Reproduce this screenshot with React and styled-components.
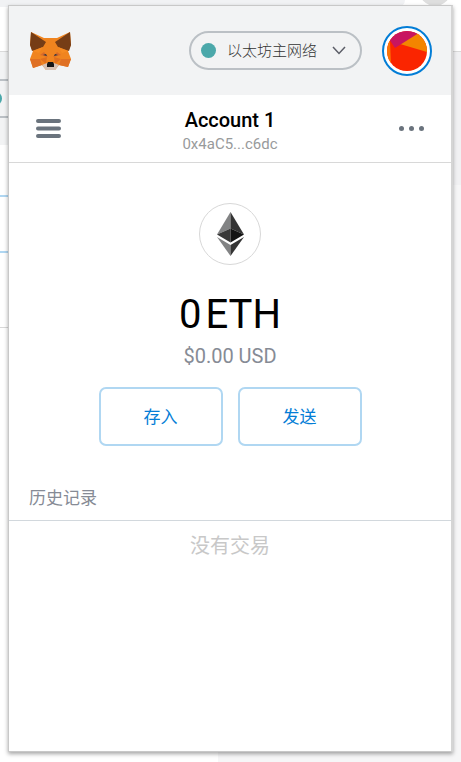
import React from "react";
import styled, { createGlobalStyle } from "styled-components";

const GlobalStyle = createGlobalStyle`
  *, *::before, *::after { box-sizing: border-box; }
  body { margin: 0; font-family: Roboto, "Noto Sans CJK SC", sans-serif; color: #000; }
  h1, h2, p { margin: 0; font-weight: 400; }
  button { font: inherit; cursor: pointer; padding: 0; }
  svg { display: block; }
`;

const Page = styled.div`
  position: relative;
  display: flex;
  min-height: 100vh;
  padding: 5px 8px 10px;
  overflow: hidden;
`;

const Backdrop = styled.div`
  position: absolute;
  inset: 0;
  display: grid;
  grid-template-rows: 52px 1fr;
  background: #fff;
`;

const BrowserBar = styled.div`
  position: relative;
  overflow: hidden;
  border-bottom: 1px solid #dadada;
  &::before {
    content: "";
    position: absolute;
    left: 0;
    top: 0;
    width: 405px;
    height: 7px;
    background: #f1f2f4;
    border-radius: 0 0 8px 0;
  }
  &::after {
    content: "";
    position: absolute;
    right: 10px;
    top: -26px;
    width: 32px;
    height: 32px;
    border-radius: 50%;
    background: #dedede;
  }
`;

const BackColumns = styled.div`
  display: grid;
  grid-template-columns: 218px 1fr;
`;

const BackLeft = styled.div`
  background: #fff;
`;

const BackHeader = styled.div`
  height: 93px;
  padding-top: 27px;
  background: #f2f3f4;
`;

const BackNetwork = styled.div`
  display: flex;
  align-items: center;
  height: 39px;
  border: solid #bbc0c5;
  border-width: 2px 0;
  &::before {
    content: "";
    width: 15px;
    height: 15px;
    margin-left: -13px;
    border-radius: 50%;
    background: #4ba8aa;
  }
`;

const BackButton = styled.div`
  height: 58px;
  margin-top: 50px;
  border: solid #b0d7f2;
  border-width: 2px 0;
`;

const BackRule = styled.div`
  height: 75px;
  border-bottom: 1px solid #d8d8d8;
`;

const BackRight = styled.div`
  background: #f6f6f7;
  &::before {
    content: "";
    display: block;
    height: 133px;
    background: #f1f1f3;
  }
`;

const Popup = styled.main`
  position: relative;
  flex: 1;
  display: flex;
  flex-direction: column;
  background: #fff;
  border: 1px solid #c8c8c8;
  border-right-width: 2px;
  border-right-color: #d5d5d5;
  box-shadow: 0 2px 4px rgba(0, 0, 0, 0.35);
`;

const Header = styled.header`
  display: flex;
  align-items: center;
  height: 89px;
  padding: 0 19px 0 21px;
  background: #f2f3f4;
`;

const NetworkButton = styled.button`
  display: flex;
  align-items: center;
  width: 173px;
  height: 39px;
  margin: 0 20px 0 auto;
  padding: 0 14px 0 10px;
  border: 2px solid #bbc0c5;
  border-radius: 20px;
  background: transparent;
  color: #5b5d67;
  font-size: 15px;
`;

const NetworkDot = styled.span`
  width: 15px;
  height: 15px;
  margin-right: 11px;
  border-radius: 50%;
  background: #4ba8aa;
`;

const NetworkName = styled.span`
  flex: 1;
  padding-bottom: 3px;
  text-align: left;
  font-weight: 300;
  color: #333;
`;

const Avatar = styled.button`
  display: grid;
  place-items: center;
  width: 50px;
  height: 50px;
  border: 2px solid #037dd6;
  border-radius: 50%;
  background: #fff;
`;

const AccountBar = styled.section`
  display: flex;
  align-items: center;
  justify-content: space-between;
  height: 68px;
  padding: 0 26px;
  border-bottom: 1px solid #d8d8d8;
`;

const IconButton = styled.button`
  border: 0;
  background: transparent;
  color: #6a737d;
`;

const AccountText = styled.div`
  padding-top: 6px;
  text-align: center;
`;

const AccountName = styled.h1`
  font-size: 20px;
  line-height: 24px;
  && { font-weight: 500; }
`;

const Address = styled.p`
  font-size: 15px;
  line-height: 24px;
  color: #989a9b;
`;

const Overview = styled.section`
  display: flex;
  flex-direction: column;
  align-items: center;
  padding-top: 40px;
`;

const TokenBadge = styled.div`
  display: grid;
  place-items: center;
  width: 62px;
  height: 62px;
  border: 1px solid #d8d8d8;
  border-radius: 50%;
`;

const Balance = styled.p`
  display: flex;
  gap: 4px;
  margin-top: 25px;
  font-size: 40px;
  line-height: 50px;
`;

const FiatBalance = styled.p`
  font-size: 20px;
  line-height: 32px;
  color: #868b95;
`;

const Actions = styled.div`
  display: flex;
  gap: 15px;
  margin-top: 15px;
`;

const ActionButton = styled.button`
  width: 124px;
  height: 59px;
  padding-bottom: 2px;
  border: 2px solid #b0d7f2;
  border-radius: 7px;
  background: #fff;
  color: #037dd6;
  font-size: 17px;
`;

const HistoryTitle = styled.h2`
  height: 44px;
  margin-top: 31px;
  padding-left: 20px;
  border-bottom: 1px solid #d2d8dd;
  font-size: 17px;
  line-height: 43px;
  color: #868b95;
`;

const EmptyHistory = styled.p`
  text-align: center;
  font-size: 20px;
  line-height: 50px;
  color: #c8c8c8;
`;

const FoxLogo = () => (
  <svg width="41" height="38" viewBox="0 0 41 38" role="img" aria-label="MetaMask">
    <path d="M1 0 14 6H27L40 0 41 13 38 19 41 27 38 35 29 33 25 38H16L12 33 3 36 0 27 3 19 0 13Z" fill="#f0841f" />
    <path d="M1 0 16 10 13 15 2 19 0 13ZM40 0 25 10 28 15 39 19 41 13Z" fill="#763d16" />
    <path d="M3 19 13 15 9 21ZM38 19 28 15 32 21Z" fill="#f68b22" />
    <path d="M0 27H10L12 33 3 36ZM41 27H31L29 33 38 35Z" fill="#df7024" />
    <path d="M10 23 14 20 18 25ZM31 23 27 20 23 25Z" fill="#d96a28" />
    <path d="M13 23 16 22 17 24ZM28 23 25 22 24 24Z" fill="#233447" />
    <path d="M10 27 17 25 16 32ZM31 27 24 25 25 32Z" fill="#e06f1f" />
    <path d="M12 33 17 31H24L29 33 25 38H16Z" fill="#d7c1b3" />
    <path d="M18 30H23L24 32V35H17V32Z" fill="#161616" />
  </svg>
);

const AvatarArt = () => (
  <svg width="40" height="40" viewBox="0 0 40 40" aria-hidden="true">
    <defs><clipPath id="avatar"><circle cx="20" cy="20" r="20" /></clipPath></defs>
    <g clipPath="url(#avatar)">
      <path fill="#fa2500" d="M0 0H40V40H0Z" />
      <path fill="#f38500" d="M13 13 32 0H40V21Z" />
      <path fill="#c81560" d="M0 0H35L8 17 2 8Z" />
      <path fill="#fc7405" d="M0 10 3 10 4 34 0 30Z" />
    </g>
  </svg>
);

const EthIcon = () => (
  <svg width="27" height="44" viewBox="0 0 27 44" role="img" aria-label="Ethereum">
    <path d="M13.5 0V16.5L0 22.5Z" fill="#828384" />
    <path d="M13.5 0V16.5L27 22.5Z" fill="#343434" />
    <path d="M0 22.5 13.5 16.5V30.5Z" fill="#393939" />
    <path d="M27 22.5 13.5 16.5V30.5Z" fill="#141414" />
    <path d="M0 25 13.5 33V44Z" fill="#828384" />
    <path d="M27 25 13.5 33V44Z" fill="#343434" />
  </svg>
);

export default function App() {
  return (
    <>
      <GlobalStyle />
      <Page>
        <Backdrop aria-hidden="true">
          <BrowserBar />
          <BackColumns>
            <BackLeft>
              <BackHeader><BackNetwork /></BackHeader>
              <BackButton />
              <BackRule />
            </BackLeft>
            <BackRight />
          </BackColumns>
        </Backdrop>
        <Popup>
          <Header>
            <FoxLogo />
            <NetworkButton>
              <NetworkDot />
              <NetworkName>以太坊主网络</NetworkName>
              <svg width="14" height="9" viewBox="0 0 14 9" fill="none" stroke="#5b5d67" strokeWidth="1.5" aria-hidden="true">
                <path d="M1 1 7 7.5 13 1" />
              </svg>
            </NetworkButton>
            <Avatar aria-label="Account menu"><AvatarArt /></Avatar>
          </Header>
          <AccountBar>
            <IconButton aria-label="Menu">
              <svg width="27" height="20" viewBox="0 0 27 20" stroke="currentColor" strokeWidth="4" strokeLinecap="round">
                <path d="M3 2H24M3 9.5H24M3 17H24" />
              </svg>
            </IconButton>
            <AccountText>
              <AccountName>Account 1</AccountName>
              <Address>0x4aC5...c6dc</Address>
            </AccountText>
            <IconButton aria-label="Account options">
              <svg width="27" height="6" viewBox="0 0 27 6" fill="currentColor">
                <circle cx="3.5" cy="2.5" r="2.5" />
                <circle cx="13.5" cy="2.5" r="2.5" />
                <circle cx="23.5" cy="2.5" r="2.5" />
              </svg>
            </IconButton>
          </AccountBar>
          <Overview>
            <TokenBadge><EthIcon /></TokenBadge>
            <Balance><span>0</span><span>ETH</span></Balance>
            <FiatBalance>$0.00 USD</FiatBalance>
            <Actions>
              <ActionButton>存入</ActionButton>
              <ActionButton>发送</ActionButton>
            </Actions>
          </Overview>
          <HistoryTitle>历史记录</HistoryTitle>
          <EmptyHistory>没有交易</EmptyHistory>
        </Popup>
      </Page>
    </>
  );
}
